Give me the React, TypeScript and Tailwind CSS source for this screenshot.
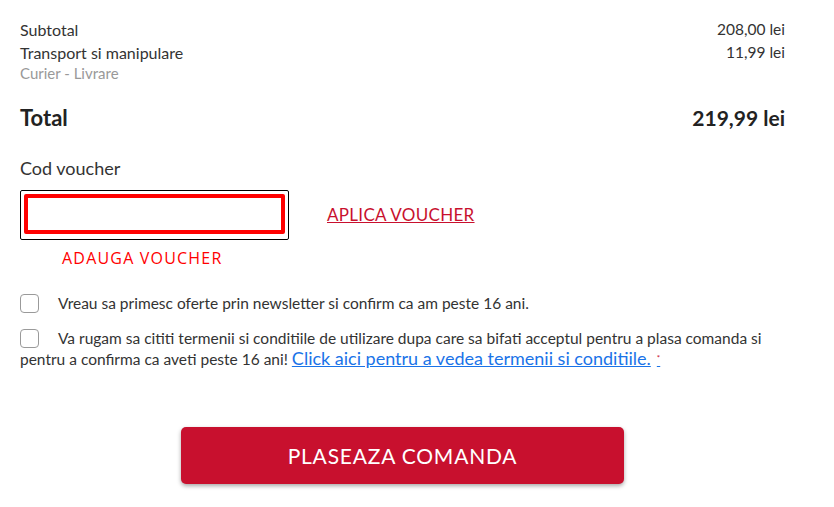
import React from "react";

const font = { fontFamily: "Lato, 'Open Sans', sans-serif" };

function Row({ label, value, sub }: { label: string; value: string; sub?: string }) {
  return (
    <div className="flex justify-between items-start">
      <div>
        <div className="text-[16px] leading-[23px] text-[#333]">{label}</div>
        {sub && <div className="text-[15px] leading-[19px] text-[#999]">{sub}</div>}
      </div>
      <div className="text-[15.5px] leading-[23px] text-[#333]">{value}</div>
    </div>
  );
}

function Checkbox() {
  return (
    <span className="inline-block align-middle w-[19px] h-[19px] rounded-[4px] border-[1.5px] border-[#9a9a9a] bg-white mr-[19px] -mt-[3px]" />
  );
}

export default function App() {
  return (
    <div className="w-[834px] h-[507px] bg-white px-5 pt-[18px]" style={font}>
      <div className="w-[765px]">
        {/* Totals */}
        <Row label="Subtotal" value="208,00 lei" />
        <Row label="Transport si manipulare" value="11,99 lei" sub="Curier - Livrare" />

        <div className="flex justify-between items-center mt-[18px] text-[21px] font-bold text-[#222]">
          <span className="text-[22px]">Total</span>
          <span>219,99 lei</span>
        </div>

        {/* Voucher */}
        <div className="mt-[21px] text-[18px] text-[#333]">Cod voucher</div>
        <div className="flex items-center mt-[8px]">
          <div className="w-[269px] h-[50px] border border-black rounded-[2px] p-[3px]">
            <div className="w-full h-[40px] border-4 border-[#ff0000] rounded-[2px]" />
          </div>
          <a className="ml-[38px] text-[17px] text-[#c8102e] underline tracking-[0.3px]">APLICA VOUCHER</a>
        </div>
        <div
          className="ml-[42px] mt-[6px] text-[16px] text-[#ff0000] tracking-[1.2px]"
          style={{ fontFamily: "'Open Sans', sans-serif" }}
        >
          ADAUGA VOUCHER
        </div>

        {/* Checkboxes */}
        <p className="mt-[23px] text-[15.5px] leading-[20px] text-[#333]">
          <Checkbox />
          Vreau sa primesc oferte prin newsletter si confirm ca am peste 16 ani.
        </p>
        <p className="mt-[15px] text-[15.5px] leading-[20px] text-[#333]">
          <Checkbox />
          Va rugam sa cititi termenii si conditiile de utilizare dupa care sa bifati acceptul pentru a plasa comanda si
          pentru a confirma ca aveti peste 16 ani!{" "}
          <a className="text-[18px] text-[#1a73e8] underline">
            Click aici pentru a vedea termenii si conditiile.
            <span className="ml-[6px] text-[8px] text-[#c8102e] align-top">*</span>
          </a>
        </p>

        {/* Submit */}
        <div className="flex justify-center mt-[58px]">
          <button className="w-[443px] h-[57px] bg-[#c8102e] rounded-[5px] shadow-[0_2px_4px_rgba(0,0,0,0.35)] text-white text-[21px] tracking-[0.8px]">
            PLASEAZA COMANDA
          </button>
        </div>
      </div>
    </div>
  );
}
